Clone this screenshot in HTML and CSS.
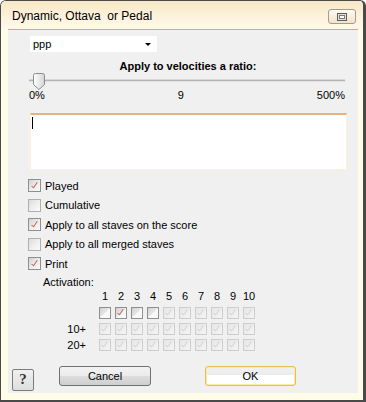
FILE: index.html
```html
<!DOCTYPE html>
<html lang="en">
<head>
  <meta charset="UTF-8">
  <meta name="viewport" content="width=device-width, initial-scale=1.0">
  <title>Dynamic, Ottava or Pedal</title>
  <link rel="stylesheet" href="styles.css">
</head>
<body>
  <div class="window">
    <div class="titlebar">
      <span class="title">Dynamic, Ottava&nbsp; or Pedal</span>
      <span class="tb-btn">
        <svg width="10" height="8" viewBox="0 0 10 8"><rect x="0.5" y="0.5" width="9" height="7" fill="#e4e0da" stroke="#5a5a5a"/><rect x="2.5" y="2.5" width="5" height="3" fill="#fff" stroke="#7a7a7a"/></svg>
      </span>
    </div>
    <div class="client">
      <div class="combo"><span>ppp</span><span class="arrow"></span></div>
      <div class="heading">Apply to velocities a ratio:</div>
      <div class="slider">
        <div class="track"></div>
        <svg class="thumb" width="12" height="17" viewBox="0 0 12 17">
          <defs><linearGradient id="tg" x1="0" y1="0" x2="1" y2="0"><stop offset="0" stop-color="#ffffff"/><stop offset="1" stop-color="#d4d4d4"/></linearGradient></defs>
          <path d="M0.5 2.5 Q0.5 0.5 2.5 0.5 H9.5 Q11.5 0.5 11.5 2.5 V11.5 L6 16.5 L0.5 11.5 Z" fill="url(#tg)" stroke="#8a8a8a"/>
        </svg>
      </div>
      <div class="scale"><span>0%</span><span>9</span><span>500%</span></div>
      <div class="memo"><span class="caret"></span></div>
      <div class="checks">
        <div class="check"><span class="box on"></span>Played</div>
        <div class="check"><span class="box off"></span>Cumulative</div>
        <div class="check"><span class="box on"></span>Apply to all staves on the score</div>
        <div class="check"><span class="box off"></span>Apply to all merged staves</div>
        <div class="check"><span class="box on"></span>Print</div>
      </div>
      <div class="activation">Activation:</div>
      <div class="grid" id="grid"></div>
      <div class="buttons">
        <span class="help">?</span>
        <span class="btn cancel">Cancel</span>
        <span class="btn ok">OK</span>
      </div>
    </div>
  </div>

  <script>
    const grid = document.getElementById('grid');
    const rows = ['', '10+', '20+'];

    // header row with numbers
    grid.appendChild(document.createElement('span'));
    for (let i = 1; i <= 10; i++) {
      const n = document.createElement('span');
      n.className = 'num';
      n.textContent = i;
      grid.appendChild(n);
    }

    rows.forEach((label, r) => {
      const l = document.createElement('span');
      l.className = 'row-label';
      l.textContent = label;
      grid.appendChild(l);
      for (let c = 0; c < 10; c++) {
        const b = document.createElement('span');
        if (r === 0 && c < 4) {
          b.className = c === 1 ? 'cell on' : 'cell';
        } else {
          b.className = 'cell dis';
        }
        grid.appendChild(b);
      }
    });
  </script>
</body>
</html>
```

FILE: styles.css
```css
body { margin: 0; font-family: "Liberation Sans", Arial, sans-serif; font-size: 11px; color: #000; }

.window {
  width: 366px;
  height: 402px;
  box-sizing: border-box;
  display: flex;
  flex-direction: column;
  background: #fffce8;
  border: 1px solid #4a4a4a;
  border-right: 3px solid #4a4a4a;
  border-bottom: 2px solid #4a4a4a;
  border-radius: 6px 6px 0 0;
  overflow: hidden;
}

.titlebar {
  height: 28px;
  flex: none;
  display: flex;
  align-items: center;
  justify-content: space-between;
  padding: 0 7px 0 11px;
  background: linear-gradient(#f8e7c6, #fdf3de 60%, #fff9ec);
}
.title { font-size: 12px; padding-top: 1px; }
.tb-btn {
  width: 26px;
  height: 13px;
  margin-top: 3px;
  border: 1px solid #a8998a;
  border-radius: 3px;
  background: linear-gradient(#fffaf2, #f1e4cc);
  display: flex;
  align-items: center;
  justify-content: center;
}
.tb-btn svg { display: block; }

.client {
  flex: 1;
  margin: 0 5px 7px 7px;
  background: #f0f0f0;
  border-top: 1px solid #dca592;
  display: flex;
  flex-direction: column;
  align-items: flex-start;
}

.combo {
  margin: 6px 0 0 22px;
  width: 127px;
  height: 16px;
  box-sizing: border-box;
  background: #fff;
  display: flex;
  align-items: center;
  justify-content: space-between;
  padding: 0 6px 0 3px;
}
.arrow { width: 0; height: 0; border-left: 3px solid transparent; border-right: 3px solid transparent; border-top: 3px solid #000; }

.heading { align-self: stretch; text-align: center; font-weight: bold; line-height: 13px; margin-top: 8px; padding-left: 10px; }

.slider { position: relative; margin-left: 21px; width: 316px; height: 16px; }
.track { margin-top: 6px; height: 1px; background: #b4b4b4; border-bottom: 1px solid #e0e0e0; border-top: 1px solid #d8d8d8; }
.thumb { position: absolute; left: 4px; top: 0; }

.scale { margin-left: 21px; width: 316px; display: flex; justify-content: space-between; line-height: 13px; }

.memo {
  margin: 11px 0 0 22px;
  width: 317px;
  height: 57px;
  box-sizing: border-box;
  background: #fff;
  border: 1px solid #fcf3d6;
  border-top: 2px solid #e4b47c;
  padding: 2px 0 0 1px;
}
.caret { display: block; width: 1px; height: 12px; background: #000; }

.checks { margin: 6px 0 0 20px; }
.check { height: 19.5px; display: flex; align-items: center; gap: 4px; }

.box, .cell {
  width: 13px;
  height: 13px;
  box-sizing: border-box;
  border: 1px solid #8e8f8f;
  background: linear-gradient(135deg, #d2d2d2, #ececec 50%, #fafafa);
  position: relative;
}
.box.off { border-color: #b0b0b0; background: linear-gradient(135deg, #dcdcdc, #eeeeee 50%, #fbfbfb); }
.box.on::after, .cell.on::after, .cell.dis::after {
  content: "";
  position: absolute;
  left: 4px;
  top: 1px;
  width: 2px;
  height: 6px;
  border-right: 1.5px solid #d0604c;
  border-bottom: 1.5px solid #d0604c;
  transform: rotate(35deg);
}

.activation { margin: 1px 0 0 35px; line-height: 14px; }

.grid {
  margin-left: 52px;
  display: grid;
  grid-template-columns: 35px repeat(10, 12px);
  grid-template-rows: 14px 12px 12px 12px;
  column-gap: 4px;
  row-gap: 4px;
  align-items: center;
}
.num { text-align: center; white-space: nowrap; display: flex; justify-content: center; }
.row-label { text-align: right; padding-right: 9px; }
.cell { width: 12px; height: 12px; background: linear-gradient(135deg, #cfcfcf 0, #e6e6e6 48%, #f8f8f8 52%, #fdfdfd); }
.cell.on::after { left: 3px; top: 0; }
.cell.dis { border-color: #cdcdcd; background: linear-gradient(135deg, #e6e6e6, #f4f4f4); }
.cell.dis::after { left: 3px; top: 0; border-color: #d4d4d4; border-width: 0 1px 1px 0; }

.buttons { display: flex; align-items: flex-start; margin: 15px 0 0 4px; }
.help {
  margin-top: 3px;
  width: 22px;
  height: 22px;
  box-sizing: border-box;
  border: 1px solid #7d7d7d;
  border-radius: 2px;
  background: linear-gradient(#f0f0f0, #dedede);
  display: flex;
  align-items: center;
  justify-content: center;
  font-family: "Liberation Serif", serif;
  font-weight: bold;
  font-size: 15px;
  color: #333;
}
.btn {
  width: 92px;
  height: 20px;
  box-sizing: border-box;
  border-radius: 3px;
  display: flex;
  align-items: center;
  justify-content: center;
}
.cancel { margin-left: 25px; border: 1px solid #707070; background: linear-gradient(#f3f3f3 0, #ebebeb 50%, #dddddd 50%, #cfcfcf); }
.ok { margin-left: 54px; width: 91px; border: 1px solid #e2c050; box-shadow: inset 0 0 0 1px #fbeca0; background: linear-gradient(#f2f2f2 0, #ebebeb 45%, #fff 45%); }
```
